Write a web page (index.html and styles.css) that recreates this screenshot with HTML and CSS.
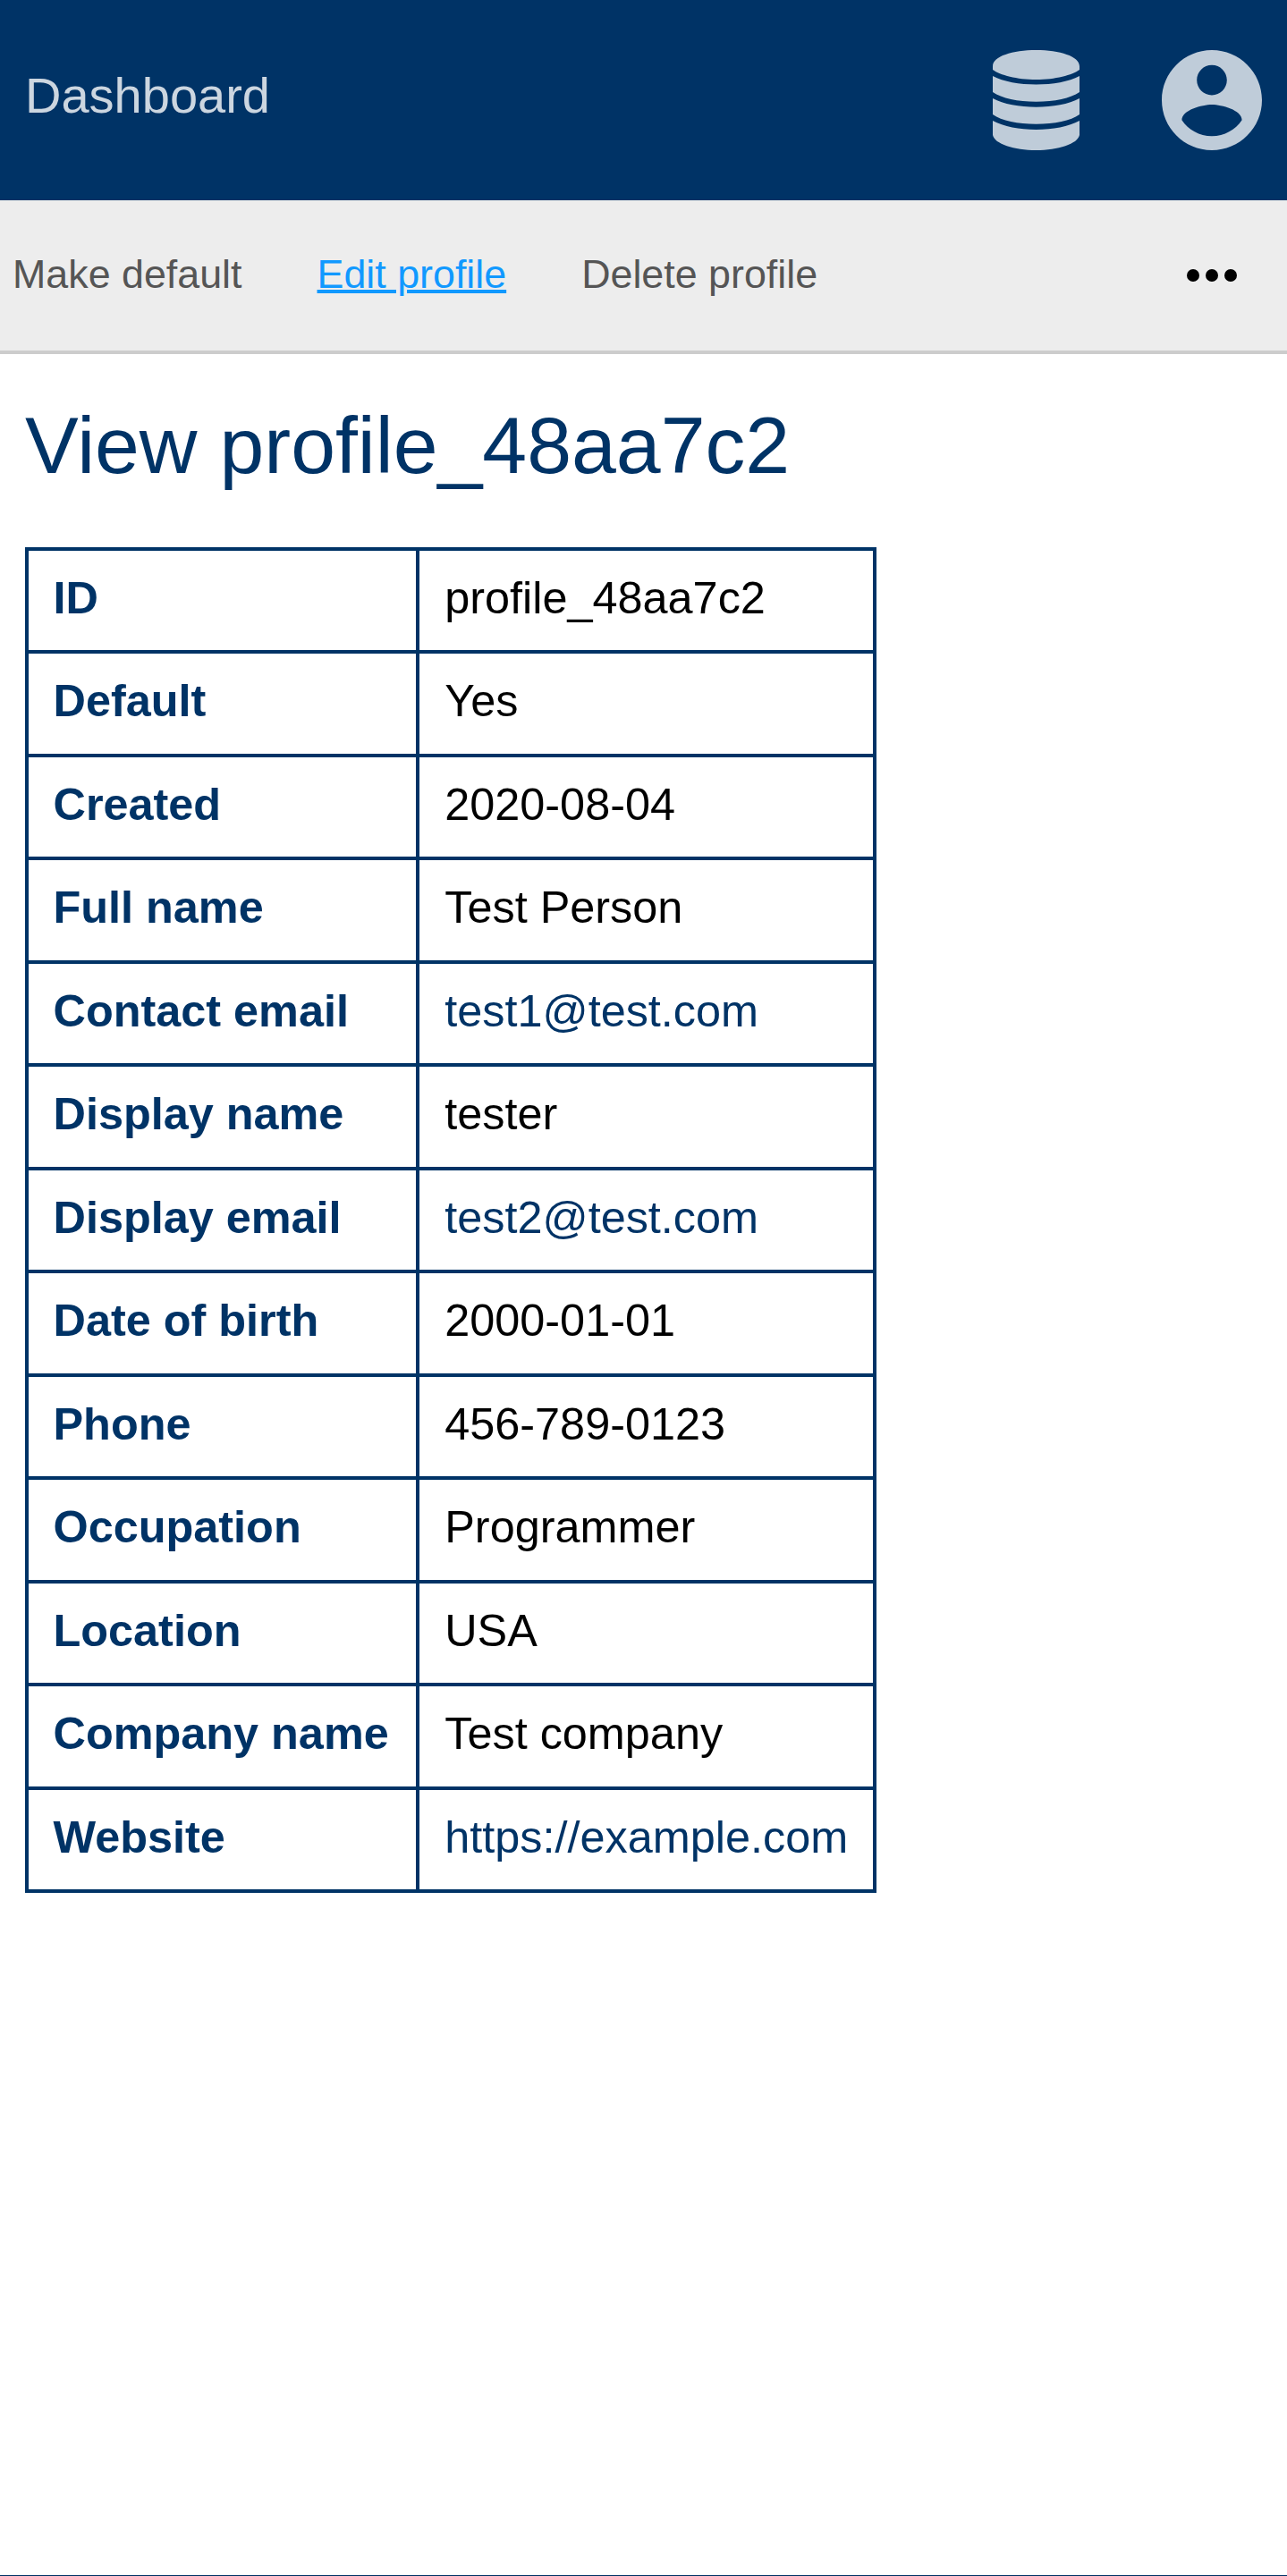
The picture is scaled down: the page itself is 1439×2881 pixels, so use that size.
FILE: index.html
```html
<!DOCTYPE html>
<html lang="en">
<head>
<meta charset="utf-8">
<title>View profile_48aa7c2</title>
<link rel="stylesheet" href="styles.css">
</head>
<body>
<header class="topbar">
  <a class="brand">Dashboard</a>
  <nav class="icons">
    <svg class="icon-db" viewBox="0 0 97 112"><path d="M0 18C0 7 22 0 48.500 0S97 7 97 18v4C89 28 70 33 48.500 33S8 28 0 22ZM0 29C12 35.500 30 38.500 48.500 38.500S85 35.500 97 29V47C87 54 69 57.700 48.500 57.700S10 54 0 47ZM0 54C12 60.500 30 63.700 48.500 63.700S85 60.500 97 54V72C87 79 69 82.800 48.500 82.800S10 79 0 72ZM0 79C12 85.700 30 88.900 48.500 88.900S85 85.700 97 79V95C95 105 73 112 48.500 112S2 105 0 95Z"/></svg>
    <svg class="icon-user" viewBox="2 2 20 20"><path d="M12 2C6.480 2 2 6.480 2 12s4.480 10 10 10 10-4.480 10-10S17.520 2 12 2zm0 3c1.660 0 3 1.340 3 3s-1.340 3-3 3-3-1.340-3-3 1.340-3 3-3zm0 14.200c-2.500 0-4.710-1.280-6-3.220.030-1.990 4-3.080 6-3.080 1.990 0 5.970 1.090 6 3.080-1.290 1.940-3.500 3.220-6 3.220z"/></svg>
  </nav>
</header>
<nav class="menu">
  <a>Make default</a>
  <a class="active">Edit profile</a>
  <a>Delete profile</a>
  <svg class="more" viewBox="0 0 56 14"><circle cx="7" cy="7" r="7"/><circle cx="28" cy="7" r="7"/><circle cx="49" cy="7" r="7"/></svg>
</nav>
<main class="content">
  <h1>View profile_48aa7c2</h1>
  <table class="profile">
    <tr><th>ID</th><td>profile_48aa7c2</td></tr>
    <tr><th>Default</th><td>Yes</td></tr>
    <tr><th>Created</th><td>2020-08-04</td></tr>
    <tr><th>Full name</th><td>Test Person</td></tr>
    <tr><th>Contact email</th><td><a>test1@test.com</a></td></tr>
    <tr><th>Display name</th><td>tester</td></tr>
    <tr><th>Display email</th><td><a>test2@test.com</a></td></tr>
    <tr><th>Date of birth</th><td>2000-01-01</td></tr>
    <tr><th>Phone</th><td>456-789-0123</td></tr>
    <tr><th>Occupation</th><td>Programmer</td></tr>
    <tr><th>Location</th><td>USA</td></tr>
    <tr><th>Company name</th><td>Test company</td></tr>
    <tr><th>Website</th><td><a>https://example.com</a></td></tr>
  </table>
</main>
<footer class="footer"></footer>
</body>
</html>
```
FILE: styles.css
```css
* { box-sizing: border-box; }
body {
  margin: 0;
  height: 2881px;
  display: flex;
  flex-direction: column;
  overflow: hidden;
  background: #fff;
  color: #000;
  font-family: "Liberation Sans", Arial, sans-serif;
}
.topbar {
  height: 224px;
  padding: 0 28px;
  display: flex;
  align-items: center;
  justify-content: space-between;
  background: #036;
}
.brand {
  padding-bottom: 10px;
  font-size: 56px;
  line-height: 64px;
  color: #ccd6e0;
}
.icons {
  display: flex;
  gap: 92px;
  fill: #bfccd9;
}
.icon-db { width: 97px; height: 112px; }
.icon-user { width: 112px; height: 112px; }
.menu {
  height: 172px;
  padding: 0 56px 0 14px;
  display: flex;
  align-items: center;
  gap: 84px;
  background: #ededed;
  border-bottom: 4px solid #ccc;
  font-size: 44.8px;
  line-height: 52px;
  color: #555;
}
.menu a { padding-bottom: 4px; }
.active {
  color: #19f;
  text-decoration: underline;
  text-decoration-thickness: 4px;
}
.more {
  width: 56px;
  height: 14px;
  margin-left: auto;
}
.content {
  flex: 1;
  padding: 51px 28px 0;
}
h1 {
  margin: 0 0 61.5px;
  font-size: 89.6px;
  font-weight: 400;
  line-height: 103px;
  color: #036;
}
.profile {
  border-collapse: collapse;
  font-size: 50.4px;
  line-height: 56px;
}
.profile tr { height: 115.5px; }
.profile th,
.profile td {
  padding: 0 28px 5px;
  border: 4px solid #036;
  text-align: left;
  white-space: nowrap;
}
.profile th { padding: 0 30.5px 5px 27.5px; }
.profile th,
.profile a { color: #036; }
.footer {
  height: 1px;
  background: #036;
}
```
